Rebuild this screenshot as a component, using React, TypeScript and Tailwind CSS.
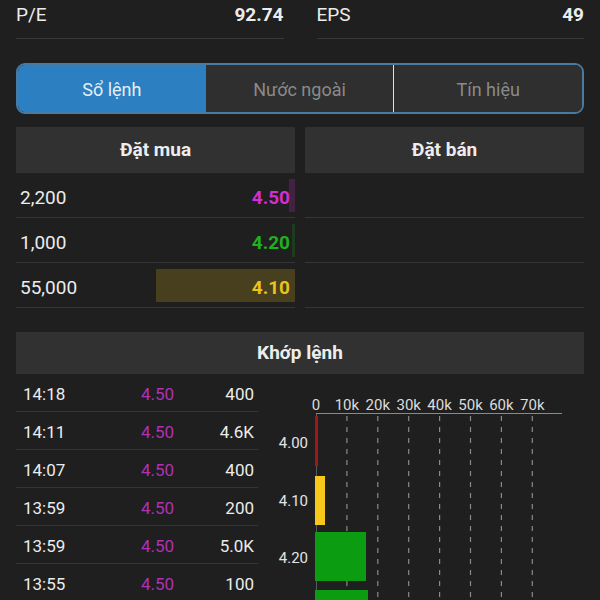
import React from "react";

type BookRow = { volume: number; price: string; text: string; bar: string };

const bids: BookRow[] = [
  { volume: 2200, price: "4.50", text: "text-[#d22ed2]", bar: "bg-[#d22ed2]/20" },
  { volume: 1000, price: "4.20", text: "text-[#1fb01f]", bar: "bg-[#1fb01f]/20" },
  { volume: 55000, price: "4.10", text: "text-[#e9c21c]", bar: "bg-[#e9c21c]/20" },
];

const trades = [
  { time: "14:18", price: "4.50", vol: "400" },
  { time: "14:11", price: "4.50", vol: "4.6K" },
  { time: "14:07", price: "4.50", vol: "400" },
  { time: "13:59", price: "4.50", vol: "200" },
  { time: "13:59", price: "4.50", vol: "5.0K" },
  { time: "13:55", price: "4.50", vol: "100" },
];

const ticks = ["0", "10k", "20k", "30k", "40k", "50k", "60k", "70k"];

function MatchChart() {
  const x0 = 58;
  const step = 30.9;
  return (
    <svg width={342} height={225} className="block overflow-visible">
      {ticks.map((t, i) => (
        <text
          key={t}
          x={x0 + i * step}
          y={36}
          textAnchor="middle"
          fontSize={15}
          fontFamily="Roboto, sans-serif"
          fill="#dcdcdc"
        >
          {t}
        </text>
      ))}
      <line x1={x0} y1={39.5} x2={304} y2={39.5} stroke="#8a8a8a" strokeWidth={1} />
      <line x1={x0 + 0.5} y1={40} x2={x0 + 0.5} y2={225} stroke="#5a5a5a" strokeWidth={1} />
      {ticks.slice(1).map((t, i) => (
        <line
          key={t}
          x1={x0 + (i + 1) * step}
          y1={42}
          x2={x0 + (i + 1) * step}
          y2={225}
          stroke="#8a8a8a"
          strokeWidth={1.2}
          strokeDasharray="5 6"
        />
      ))}
      <rect x={57} y={42} width={3} height={50} fill="#a3141b" />
      <rect x={57} y={102} width={10} height={49} fill="#f7c81a" />
      <rect x={57} y={158} width={51} height={49} fill="#0b9c12" />
      <rect x={57} y={216} width={53} height={20} fill="#0b9c12" />
      {[
        { y: 74, l: "4.00" },
        { y: 132, l: "4.10" },
        { y: 189, l: "4.20" },
      ].map((r) => (
        <text
          key={r.l}
          x={50}
          y={r.y}
          textAnchor="end"
          fontSize={15}
          fontFamily="Roboto, sans-serif"
          fill="#e4e4e4"
        >
          {r.l}
        </text>
      ))}
    </svg>
  );
}

export default function App() {
  const maxVol = Math.max(...bids.map((b) => b.volume));
  const headerStyle =
    "flex items-center justify-center bg-[#313131] text-[19px] font-bold text-[#ededed]";

  return (
    <div className="h-[600px] w-[600px] overflow-hidden bg-[#1f1f1f] px-4 font-['Roboto',sans-serif] text-[#ececec]">
      {/* stats */}
      <div className="grid grid-cols-2 gap-[33px]">
        <div className="flex justify-between border-b border-[#383838] pb-3 pt-1 text-[19px] leading-[22px]">
          <span>P/E</span>
          <span className="font-bold">92.74</span>
        </div>
        <div className="flex justify-between border-b border-[#383838] pb-3 pt-1 text-[19px] leading-[22px]">
          <span>EPS</span>
          <span className="font-bold">49</span>
        </div>
      </div>

      {/* tabs */}
      <div className="mt-6 flex h-[51px] overflow-hidden rounded-[9px] border-2 border-[#4a7aa0] text-[18px]">
        <div className="flex flex-1 items-center justify-center bg-[#2c80c2] pt-[2px] text-[#e6eef6]">
          Sổ lệnh
        </div>
        <div className="flex flex-1 items-center justify-center bg-[#2f2f2f] pt-[2px] text-[#8a8a8a]">
          Nước ngoài
        </div>
        <div className="flex flex-1 items-center justify-center border-l border-[#e0e0e0] bg-[#2f2f2f] pt-[2px] text-[#8a8a8a]">
          Tín hiệu
        </div>
      </div>

      {/* order book */}
      <div className="mt-[13px] grid grid-cols-2 gap-[10px]">
        <div>
          <div className={`${headerStyle} h-[46px]`}>Đặt mua</div>
          {bids.map((b) => (
            <div
              key={b.price}
              className="relative flex h-[45px] items-center justify-between border-b border-[#353535] pt-[7px] text-[19px]"
            >
              <div
                className={`absolute bottom-[5px] right-0 top-[6px] ${b.bar}`}
                style={{ width: Math.max(2, (b.volume / maxVol) * 139) }}
              />
              <span className="relative pl-1">{b.volume.toLocaleString("en-US")}</span>
              <span className={`relative pr-[5px] font-bold ${b.text}`}>{b.price}</span>
            </div>
          ))}
        </div>
        <div>
          <div className={`${headerStyle} h-[46px]`}>Đặt bán</div>
          {bids.map((b) => (
            <div key={b.price} className="h-[45px] border-b border-[#353535]" />
          ))}
        </div>
      </div>

      {/* matched orders */}
      <div className={`${headerStyle} mt-6 h-[42px]`}>Khớp lệnh</div>
      <div className="flex">
        <div className="w-[242px] shrink-0">
          {trades.map((t, i) => (
            <div
              key={i}
              className="flex h-[38px] items-center border-b border-[#353535] pt-[5px] text-[17px]"
            >
              <span className="w-[125px] pl-[7px]">{t.time}</span>
              <span className="text-[#b22fb6]">{t.price}</span>
              <span className="flex-1 pr-1 text-right">{t.vol}</span>
            </div>
          ))}
        </div>
        <MatchChart />
      </div>
    </div>
  );
}
